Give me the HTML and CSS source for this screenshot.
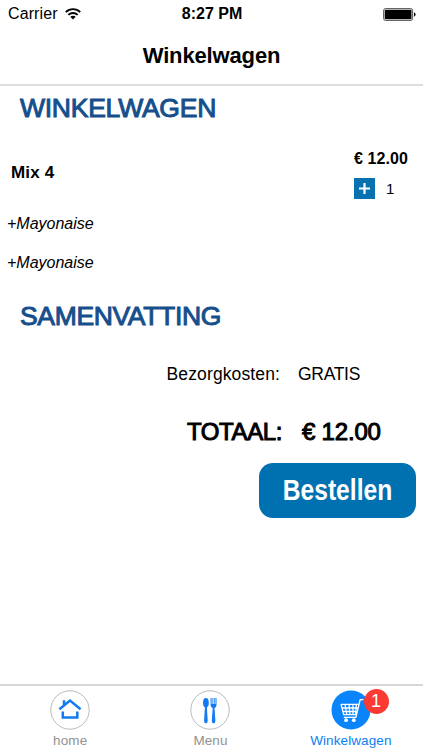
FILE: index.html
```html
<!DOCTYPE html>
<html lang="nl">
<head>
<meta charset="utf-8">
<title>Winkelwagen</title>
<link rel="stylesheet" href="styles.css">
</head>
<body>
<div class="app">
  <header class="top">
    <div class="status">
      <div class="carrier"><span>Carrier</span>
        <svg class="wifi" width="16" height="12" viewBox="0 0 16 12" fill="none" stroke="#000" stroke-width="1.9"><path d="M.8 4.1C4.8.1 11.2.1 15.2 4.1M3.3 6.9C6 4.3 10 4.3 12.7 6.9"/><path d="M5.3 8.7C6.8 7.5 9.2 7.5 10.7 8.7L8 11.6z" fill="#000" stroke="none"/></svg>
      </div>
      <div class="time">8:27 PM</div>
      <svg class="battery" width="33" height="13" viewBox="0 0 33 13"><rect x=".6" y=".6" width="29" height="11.8" rx="1.8" fill="#fff" stroke="#555" stroke-width="1"/><rect x="1.7" y="1.7" width="26.8" height="9.6" rx=".8"/><path d="M31 4.3Q32.6 5 32.6 6.5T31 8.7z"/></svg>
    </div>
    <h1 class="title">Winkelwagen</h1>
  </header>
  <main class="content">
    <h2 class="heading cart-heading">WINKELWAGEN</h2>
    <section class="item">
      <div class="item-name">Mix 4</div>
      <div class="item-side">
        <div class="price">€ 12.00</div>
        <div class="quantity">
          <button class="add" aria-label="+"><svg width="21" height="21" viewBox="0 0 21 21"><path d="M10.5 5v11M5 10.5h11" stroke="#fff" stroke-width="2.2"/></svg></button>
          <span>1</span>
        </div>
      </div>
    </section>
    <div class="extra">+Mayonaise</div>
    <div class="extra">+Mayonaise</div>
    <h2 class="heading summary-heading">SAMENVATTING</h2>
    <div class="row delivery"><span class="label">Bezorgkosten:</span><span class="value">GRATIS</span></div>
    <div class="row total"><span class="label">TOTAAL:</span><span class="value">€ 12.00</span></div>
    <button class="order"><span>Bestellen</span></button>
  </main>
  <nav class="tabs">
    <div class="tab">
      <svg class="icon" width="40" height="40" viewBox="0 0 40 40"><circle cx="20" cy="20" r="19.2" fill="#fff" stroke="#aaa" stroke-width=".8"/><g fill="none" stroke="#127bf2" stroke-width="2.5"><path d="M9.4 19.3 20 10.6l10.6 8.7M14 15v-4.8M12.8 21.5v6h14.5v-6"/></g></svg>
      <span>home</span>
    </div>
    <div class="tab">
      <svg class="icon" width="40" height="40" viewBox="0 0 40 40"><circle cx="20" cy="20" r="19.2" fill="#fff" stroke="#aaa" stroke-width=".8"/><g fill="#127bf2"><ellipse cx="15.9" cy="12.7" rx="2.9" ry="4.8"/><path d="M15 16h1.8l.9 14.5q0 2.7-1.8 2.7t-1.8-2.7zM20.6 8h1v6h.8V8h.8v6h.7V8h.8v6h.8V8h1v7q0 2.5-2 3.1l.9 12.4q0 2.7-1.8 2.7t-1.8-2.7l.9-12.4q-2.1-.6-2.1-3.1z"/></g></svg>
      <span>Menu</span>
    </div>
    <div class="tab active">
      <svg class="icon" width="40" height="40" viewBox="0 0 40 40"><circle cx="20" cy="20" r="19.5" fill="#0a84fb"/><g fill="none" stroke="#fff" stroke-width="1.3"><path d="M32.4 9.7h-3.2l-4.3 17.6H12.8M10.2 14.3h17.4M11 18h16M11.8 21.5h14.4M26 24.6H12.7L10 14M14 14l1.8 10.5M18 14l.9 10.5M22 14v10.5M25.4 14l-.8 10.5"/></g><circle cx="15.1" cy="30.2" r="1.9" fill="#fff"/><circle cx="22.8" cy="30.2" r="1.9" fill="#fff"/></svg>
      <b class="badge">1</b>
      <span>Winkelwagen</span>
    </div>
  </nav>
</div>
</body>
</html>
```
FILE: styles.css
```css
* { box-sizing: border-box; }
body { margin: 0; background: #fff; color: #000; font-family: "Liberation Sans", Arial, sans-serif; }
h1, h2 { margin: 0; }
button { border: 0; padding: 0; font-family: inherit; }
.app { height: 750px; display: flex; flex-direction: column; overflow: hidden; }
.top { height: 86px; border-bottom: 2px solid #dedede; flex: none; }
.status { height: 28px; padding: 0 7px 0 8px; display: grid; grid-template-columns: 1fr auto 1fr; align-items: center; font-size: 16px; line-height: 28px; }
.carrier { display: flex; align-items: center; gap: 7px; letter-spacing: .1px; }
.time { font-weight: bold; }
.battery { justify-self: end; }
.title { font-size: 22px; line-height: 26px; margin-top: 15px; text-align: center; letter-spacing: -.15px; }
.content { flex: 1; display: flex; flex-direction: column; }
.heading { color: #164f8c; font-size: 26.5px; font-weight: normal; line-height: 32px; padding-left: 20px; -webkit-text-stroke: 1px #164f8c; }
.cart-heading { margin-top: 6px; letter-spacing: -.25px; }
.item { display: flex; justify-content: space-between; margin-top: 25px; height: 55px; padding-left: 11px; }
.item-name { font-size: 17px; font-weight: bold; line-height: 20px; margin-top: 14px; letter-spacing: .15px; }
.item-side { width: 69px; }
.price { font-size: 16px; font-weight: bold; line-height: 20px; letter-spacing: .1px; }
.quantity { margin-top: 9px; display: flex; align-items: center; gap: 11px; font-size: 15px; }
.add { width: 21px; height: 21px; background: #0871af; }
.add svg { display: block; }
.extra { font-size: 16px; font-style: italic; line-height: 20px; padding-left: 7px; margin-top: 10px; margin-bottom: 9px; }
.summary-heading { margin-top: 18px; letter-spacing: -.35px; }
.row { display: grid; grid-template-columns: 281px 1fr; }
.label { text-align: right; }
.delivery { font-size: 17.5px; line-height: 22px; margin-top: 31px; }
.delivery .label { letter-spacing: .12px; margin-right: 1px; }
.delivery .value { padding-left: 17px; letter-spacing: -.3px; }
.total { font-size: 24px; line-height: 30px; margin-top: 32px; -webkit-text-stroke: 1px #000; }
.total .label { letter-spacing: -.4px; margin-right: -1px; }
.total .value { padding-left: 21px; letter-spacing: -.2px; }
.order { align-self: flex-end; width: 157px; height: 55px; margin: 16px 7px 0 0; border-radius: 14px; background: #0071b0; color: #fff; font-size: 29px; font-weight: bold; }
.order span { display: inline-block; transform: scaleX(.85); margin: 0 -12px; }
.tabs { height: 66px; flex: none; border-top: 2px solid #d6d6d6; display: grid; grid-template-columns: repeat(3, 1fr); padding-right: 2px; }
.tab { position: relative; display: flex; flex-direction: column; align-items: center; padding-top: 4px; color: #929292; font-size: 13.5px; line-height: 16px; gap: 3px; letter-spacing: .1px; }
.icon { display: block; }
.active { color: #0a80f5; }
.badge { position: absolute; left: 83px; top: 3px; width: 25px; height: 25px; border-radius: 50%; background: #fb3b33; color: #fff; font-size: 18px; line-height: 25px; font-weight: normal; text-align: center; }
```
